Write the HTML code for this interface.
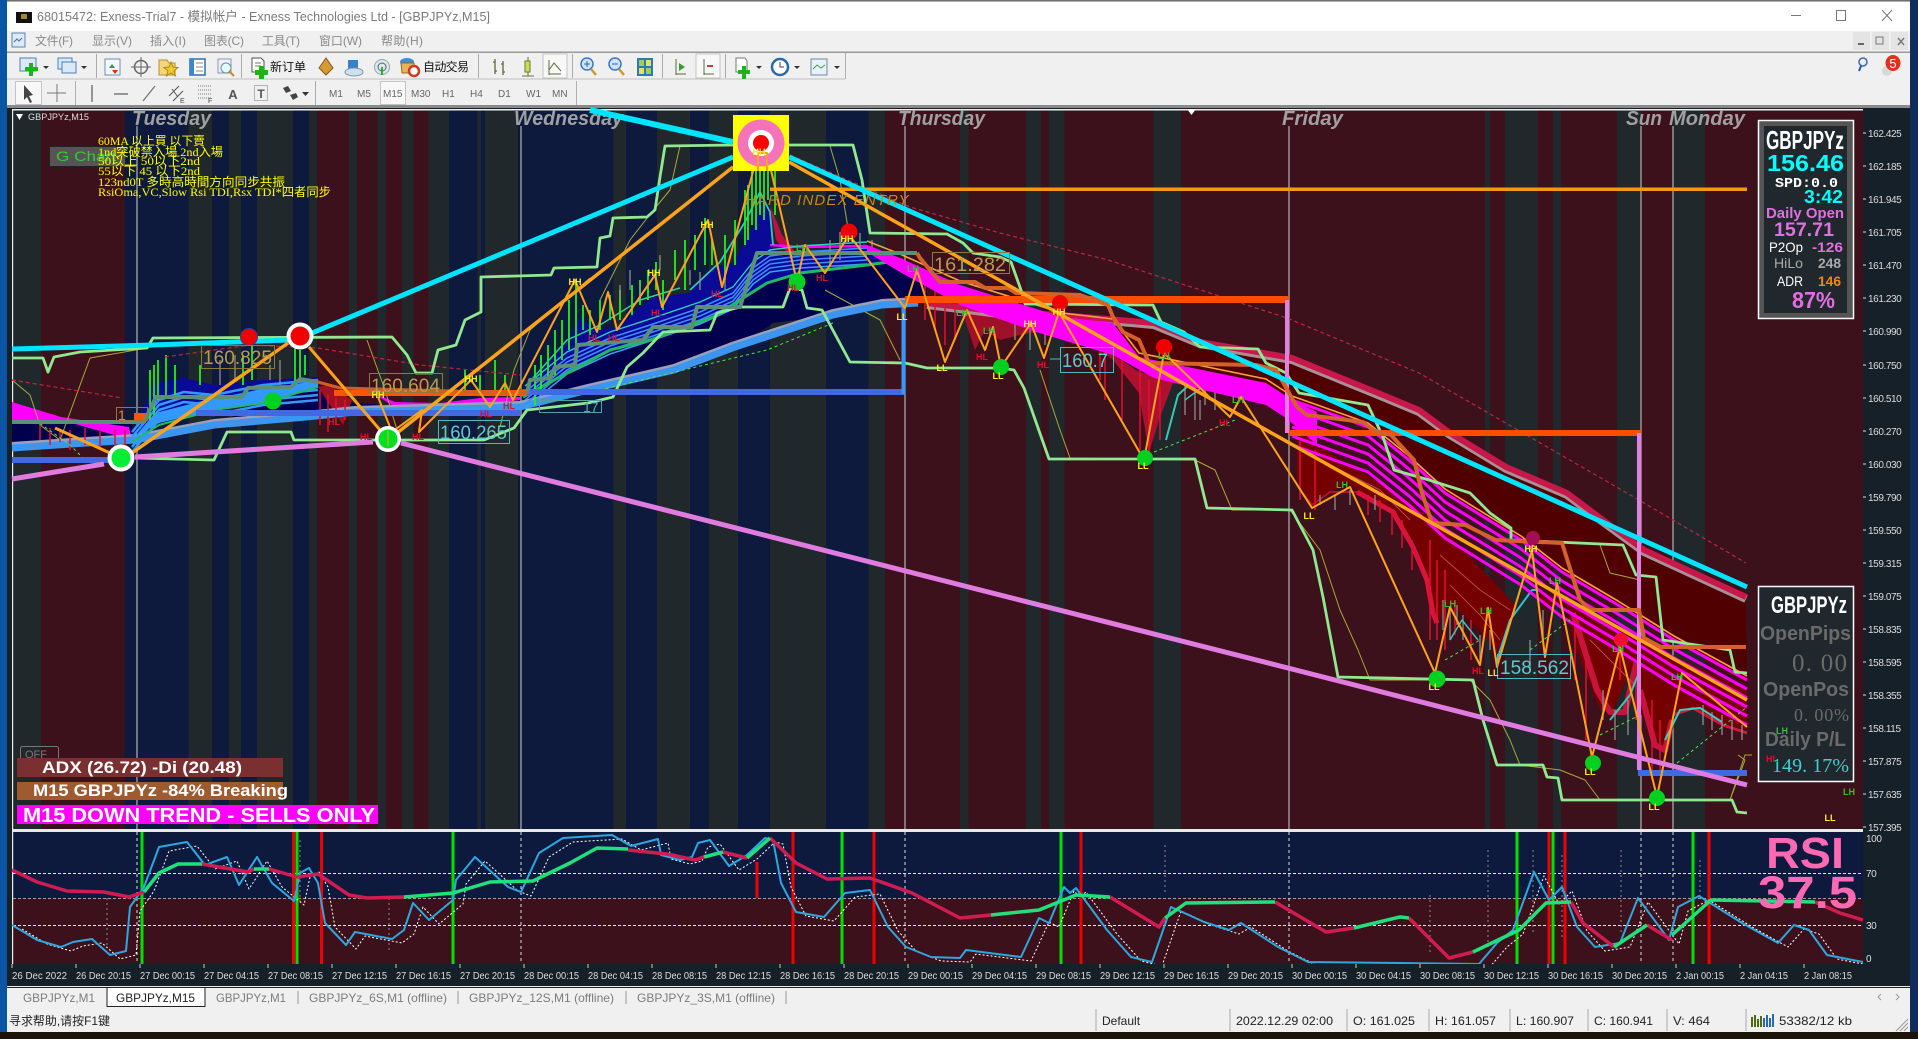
<!DOCTYPE html>
<html><head><meta charset="utf-8"><title>68015472: Exness-Trial7 - GBPJPYz,M15</title>
<style>
html,body{margin:0;padding:0;width:1918px;height:1039px;overflow:hidden;background:#0e2c5c}
svg{display:block;font-family:"Liberation Sans","Noto Sans CJK SC",sans-serif}
.mn{font-size:12px;fill:#8a8a8a}
.tf{font-size:10px;fill:#666}
.ax{font-size:10px;fill:#ddd;letter-spacing:-.4px}
.tm{font-size:10px;fill:#ddd}
.tab{font-size:12px;fill:#7c7c7c}
.st{font-size:12px;fill:#222}
.day{font-size:20px;font-weight:bold;font-style:italic;fill:#a0a0a0}
.y{font-size:12px;fill:#ffff00;font-family:"Liberation Serif","Noto Sans CJK SC",serif}
.b{font-weight:bold}
.HH,.LL{font-size:9px;font-weight:bold;fill:#ffee22;text-anchor:middle}
.HL{font-size:9px;font-weight:bold;fill:#d81030;text-anchor:middle}
.LH{font-size:9px;font-weight:bold;fill:#30c030;text-anchor:middle}
.gold{font-size:19px;fill:#b89a50}
.cy{font-size:19px;fill:#62c8cc}
polyline{fill:none;stroke-linejoin:round}
</style></head><body>
<svg width="1918" height="1039" viewBox="0 0 1918 1039" xmlns="http://www.w3.org/2000/svg">
<!-- desktop -->
<rect width="1918" height="1039" fill="#0e2c5c"/>
<rect x="0" width="8" height="1039" fill="#0b55a5"/>
<rect y="1032" width="1918" height="7" fill="#1c1408"/>
<!-- window chrome -->
<rect x="7" y="0" width="1903" height="1032" fill="#f0f0f0"/>
<rect x="7" y="0" width="1903" height="1.5" fill="#707070"/>
<rect x="7" y="2" width="1903" height="29" fill="#fff"/>
<rect x="16" y="12" width="16" height="11" fill="#11110f"/>
<rect x="21" y="14" width="6" height="5" fill="#a08a30"/>
<text x="37" y="21" font-size="13" fill="#7a7a7a" textLength="453" lengthAdjust="spacingAndGlyphs">68015472: Exness-Trial7 - 模拟帐户 - Exness Technologies Ltd - [GBPJPYz,M15]</text>
<rect x="1791" y="15" width="10" height="1" fill="#777"/>
<rect x="1836.5" y="10.5" width="9" height="10" fill="none" stroke="#777"/>
<path d="M1882 10L1892 21M1892 10L1882 21" stroke="#777"/>
<!-- menu -->
<rect x="12" y="33" width="13" height="14" fill="#dfe8f5" stroke="#5b7fb5"/>
<path d="M14 42l3-3 2 2 3-3" stroke="#3a70b0" fill="none"/>
<text class="mn" x="35" y="45" textLength="38">文件(F)</text>
<text class="mn" x="92" y="45" textLength="40">显示(V)</text>
<text class="mn" x="150" y="45" textLength="36">插入(I)</text>
<text class="mn" x="204" y="45" textLength="40">图表(C)</text>
<text class="mn" x="262" y="45" textLength="38">工具(T)</text>
<text class="mn" x="319" y="45" textLength="43">窗口(W)</text>
<text class="mn" x="381" y="45" textLength="42">帮助(H)</text>
<rect x="1853" y="32" width="17" height="18" fill="#e4e4e4"/><rect x="1872" y="32" width="17" height="18" fill="#e4e4e4"/><rect x="1891" y="32" width="17" height="18" fill="#e4e4e4"/>
<rect x="1858" y="43" width="6" height="2" fill="#666"/>
<rect x="1876" y="37" width="7" height="7" fill="none" stroke="#777"/>
<path d="M1898 38l6 7M1904 38l-6 7" stroke="#777" stroke-width="1.4"/>
<rect x="7" y="51.5" width="1903" height="1.5" fill="#9a9a9a"/>
<!-- toolbar 1 -->
<rect x="845" y="53" width="1" height="26" fill="#b0b0b0"/>
<rect x="7" y="78.5" width="838" height="1" fill="#c0c0c0"/>
<g>
<rect x="20" y="58" width="16" height="13" fill="#dbe8f8" stroke="#4a7fb8"/><rect x="29" y="63" width="4" height="13" fill="#20b020"/><rect x="25" y="67" width="13" height="4" fill="#20b020"/>
<path d="M43 66h6l-3 3z" fill="#333"/>
<rect x="58" y="58" width="14" height="11" fill="#dbe8f8" stroke="#4a7fb8"/><rect x="62" y="62" width="14" height="11" fill="#dbe8f8" stroke="#4a7fb8"/>
<path d="M81 66h6l-3 3z" fill="#333"/>
<rect x="96" y="54" width="1" height="24" fill="#aaa"/>
<rect x="105" y="59" width="15" height="16" fill="#f4f8fc" stroke="#6a90b8"/><path d="M109 68l3-4 3 4z" fill="#20a040"/><path d="M112 70l3 4 3-4z" fill="#d83020"/>
<circle cx="141" cy="67" r="6.5" fill="none" stroke="#666" stroke-width="1.5"/><path d="M141 57v20M131 67h20" stroke="#666"/>
<path d="M159 60h8l2 3h6v12h-16z" fill="#f4d678" stroke="#b49230"/><path d="M171 62l2 5 5 .5-4 3.500 1.500 5-4.500-3-4.500 3 1.500-5-4-3.500 5-.5z" fill="#f2c92e" stroke="#a88818"/>
<rect x="190" y="59" width="15" height="16" fill="#fff" stroke="#2f6fa8" stroke-width="1.500"/><rect x="190" y="59" width="4" height="16" fill="#3a88c8"/><path d="M196 63h7M196 67h7M196 71h7" stroke="#888"/>
<rect x="218" y="59" width="13" height="14" fill="#eef" stroke="#89a"/><circle cx="226" cy="68" r="5" fill="#dff" stroke="#789"/><path d="M229 71l5 5" stroke="#c08a30" stroke-width="2"/>
<rect x="241" y="54" width="1" height="24" fill="#aaa"/>
<path d="M252 58h9l3 3v11h-12z" fill="#fff" stroke="#555"/><path d="M255 63h6M255 66h6" stroke="#777"/><rect x="259" y="66" width="5" height="13" fill="#20b020"/><rect x="255" y="70" width="13" height="5" fill="#20b020"/>
<text x="270" y="71" font-size="12" fill="#111" textLength="36">新订单</text>
<path d="M319 68l7-10 7 10-7 7z" fill="#d89a30" stroke="#85591a"/>
<path d="M348 60h10v10h-10z" fill="#3a80c8"/><ellipse cx="354" cy="72" rx="9" ry="4" fill="#cfe0ee" stroke="#7a94aa"/>
<circle cx="382" cy="67" r="7.500" fill="#dfe9e4" stroke="#8aa"/><circle cx="382" cy="67" r="4" fill="none" stroke="#55a"/><path d="M382 67v8" stroke="#3a3" stroke-width="2"/>
<ellipse cx="407" cy="62" rx="7" ry="4" fill="#3a90d8"/><path d="M401 63h13l1 10h-13z" fill="#e8b25a" stroke="#986820"/><circle cx="414" cy="71" r="5" fill="#fff" stroke="#d03a20" stroke-width="2.500"/>
<text x="423" y="71" font-size="12" fill="#111" textLength="46">自动交易</text>
<rect x="478" y="54" width="1" height="24" fill="#aaa"/>
<path d="M495 59v15M493 62h2M495 71h2M503 61v14M501 64h2M503 72h2" stroke="#5a6a3a" stroke-width="1.300" fill="none"/>
<path d="M528 57v4M528 72v4" stroke="#5a6a3a"/><rect x="525" y="61" width="5" height="11" fill="#c8e050" stroke="#6a7a30"/><path d="M522 76h12" stroke="#6a7a30"/>
<rect x="543" y="54" width="24" height="24" fill="#f8f8f8" stroke="#c4c4c4"/>
<path d="M549 75V60M549 74h12M549 70l5-7 7 8" stroke="#5a6a3a" fill="none"/>
<rect x="572" y="54" width="1" height="24" fill="#aaa"/>
<circle cx="587" cy="64" r="6" fill="#cfe4fa" stroke="#3a78c0" stroke-width="1.500"/><path d="M584 64h6M587 61v6" stroke="#2a68b0"/><path d="M591 69l5 6" stroke="#c89a30" stroke-width="2.500"/>
<circle cx="615" cy="64" r="6" fill="#cfe4fa" stroke="#3a78c0" stroke-width="1.500"/><path d="M612 64h6" stroke="#2a68b0"/><path d="M619 69l5 6" stroke="#c89a30" stroke-width="2.500"/>
<rect x="637" y="58" width="16" height="18" fill="#2f78b8"/><rect x="639" y="60" width="5" height="6" fill="#9bd060"/><rect x="646" y="60" width="5" height="6" fill="#e8e060"/><rect x="639" y="68" width="5" height="6" fill="#e8e060"/><rect x="646" y="68" width="5" height="6" fill="#9bd060"/>
<rect x="662" y="54" width="1" height="24" fill="#aaa"/>
<path d="M676 59v16M676 74h10" stroke="#5a6a3a"/><path d="M679 63l6 4-6 4z" fill="#30a030"/>
<rect x="696" y="54" width="24" height="24" fill="#f8f8f8" stroke="#c4c4c4"/>
<path d="M704 59v16M704 74h10" stroke="#5a6a3a"/><path d="M707 66h6" stroke="#c04030" stroke-width="2"/>
<rect x="725" y="54" width="1" height="24" fill="#aaa"/>
<path d="M736 58h9l2 3v11h-11z" fill="#fff" stroke="#777"/><rect x="742" y="66" width="4" height="13" fill="#20b020"/><rect x="738" y="70" width="12" height="4" fill="#20b020"/>
<path d="M756 66h6l-3 3z" fill="#333"/>
<circle cx="780" cy="67" r="8" fill="#fff" stroke="#2a68a8" stroke-width="2.500"/><path d="M780 62v5h4" stroke="#444" fill="none"/>
<path d="M794 66h6l-3 3z" fill="#333"/>
<rect x="811" y="59" width="16" height="16" fill="#e8f0f8" stroke="#6c8aa8"/><path d="M813 69l4-4 4 3 4-3" stroke="#40a040" fill="none"/>
<path d="M834 66h6l-3 3z" fill="#333"/>
</g>
<!-- right of toolbar -->
<circle cx="1863" cy="62" r="4" fill="none" stroke="#3a68b0" stroke-width="1.500"/><path d="M1861 66l-2 5" stroke="#2a58a8" stroke-width="2"/>
<ellipse cx="1887" cy="71" rx="5" ry="5" fill="#d8d8d8"/>
<ellipse cx="1893" cy="63" rx="7.500" ry="8" fill="#e03020"/><text x="1893" y="68" font-size="13" fill="#fff" text-anchor="middle">5</text>
<!-- toolbar 2 -->
<rect x="15.500" y="81.500" width="26" height="23" fill="#f8f8f8" stroke="#c4c4c4"/>
<path d="M24 85l0 15 3-3 3 6 2-1-3-6 4-1z" fill="#444"/>
<path d="M57 84v18M47 93h19" stroke="#777"/><rect x="75" y="81" width="1" height="24" fill="#b0b0b0"/>
<path d="M92 85v17" stroke="#666" stroke-width="1.300"/><path d="M114 94h14" stroke="#666" stroke-width="1.300"/><path d="M143 101l12-15" stroke="#777" stroke-width="1.300"/>
<path d="M169 96l10-10M173 101l10-10M172 89l6 8" stroke="#555" fill="none"/><text x="180" y="103" font-size="7" fill="#444">E</text>
<path d="M198 86h13M198 90h13M198 94h13M198 98h13" stroke="#777" stroke-dasharray="1 1"/><text x="208" y="103" font-size="7" fill="#444">F</text>
<text x="233" y="99" font-size="13" fill="#555" text-anchor="middle" class="b">A</text>
<rect x="254.500" y="85.500" width="13" height="15" fill="none" stroke="#777" stroke-dasharray="1 1"/><text x="261" y="98" font-size="12" class="b" fill="#555" text-anchor="middle">T</text>
<path d="M283 88l5-2 3 5-5 2zM290 95l6-2 2 4-5 3z" fill="#444"/><path d="M302 92h7l-3.500 4z" fill="#333"/>
<rect x="315" y="81" width="1" height="24" fill="#aaa"/>
<rect x="380.500" y="81.500" width="25" height="23" fill="#f8f8f8" stroke="#c4c4c4"/>
<text class="tf" x="329" y="97">M1</text><text class="tf" x="357" y="97">M5</text><text class="tf" x="383" y="97">M15</text><text class="tf" x="411" y="97">M30</text><text class="tf" x="442" y="97">H1</text><text class="tf" x="470" y="97">H4</text><text class="tf" x="498" y="97">D1</text><text class="tf" x="526" y="97">W1</text><text class="tf" x="552" y="97">MN</text>
<rect x="576" y="81" width="1" height="24" fill="#b0b0b0"/>
<rect x="7" y="105" width="1903" height="3" fill="#8a8a8a"/>

<!-- chart frame bg -->
<rect x="7" y="108" width="1903" height="880" fill="#152029"/>
<rect x="12" y="109" width="1851" height="722" fill="#3d111b"/>
<!-- vertical bands -->
<g fill="#21282c">
<rect x="13" y="110" width="28" height="719"/><rect x="188.500" y="110" width="23.500" height="719"/><rect x="229" y="110" width="12" height="719"/><rect x="257" y="110" width="36" height="719"/><rect x="309" y="110" width="8" height="719"/><rect x="349" y="110" width="8" height="719"/><rect x="377.500" y="110" width="8.500" height="719"/><rect x="402" y="110" width="11.500" height="719"/><rect x="428.500" y="110" width="20.500" height="719"/><rect x="477.500" y="110" width="3.500" height="719"/><rect x="485" y="110" width="33" height="719"/><rect x="613.500" y="110" width="12.500" height="719"/><rect x="657" y="110" width="33" height="719"/><rect x="709" y="110" width="29" height="719"/><rect x="770" y="110" width="56" height="719"/><rect x="868.500" y="110" width="16.500" height="719"/><rect x="960" y="110" width="8.500" height="719"/><rect x="1026" y="110" width="15" height="719"/><rect x="1049" y="110" width="15.500" height="719"/><rect x="1153.500" y="110" width="27.500" height="719"/><rect x="1485" y="110" width="5" height="719"/><rect x="1505" y="110" width="32.500" height="719"/><rect x="1553" y="110" width="8" height="719"/><rect x="1617" y="110" width="24" height="719"/><rect x="1673" y="110" width="32" height="719"/>
</g>
<g fill="#0d1a3e">
<rect x="124.500" y="110" width="64" height="719"/><rect x="212" y="110" width="17" height="719"/><rect x="241" y="110" width="16" height="719"/><rect x="293" y="110" width="16" height="719"/><rect x="449" y="110" width="28.500" height="719"/><rect x="481" y="110" width="4" height="719"/><rect x="518" y="110" width="95.500" height="719"/><rect x="626" y="110" width="31" height="719"/><rect x="690" y="110" width="19" height="719"/><rect x="738" y="110" width="32" height="719"/><rect x="826" y="110" width="42.500" height="719"/>
</g>
<!-- separators/white border -->
<rect x="12" y="109" width="1851" height="1.500" fill="#eee"/><rect x="12" y="109" width="1.200" height="722" fill="#eee"/>
<!-- vertical grid -->
<g stroke="#a8a8a8" stroke-width="1.300"><path d="M137 126V829M521 126V829M905 126V829M1289 126V829M1641 126V829M1673 126V829"/></g>
<!-- day labels -->
<text class="day" x="132" y="125" textLength="79" lengthAdjust="spacingAndGlyphs">Tuesday</text>
<text class="day" x="514" y="125" textLength="109" lengthAdjust="spacingAndGlyphs">Wednesday</text>
<text class="day" x="898" y="125" textLength="87" lengthAdjust="spacingAndGlyphs">Thursday</text>
<text class="day" x="1282" y="125" textLength="61" lengthAdjust="spacingAndGlyphs">Friday</text>
<text class="day" x="1626" y="125" textLength="36" lengthAdjust="spacingAndGlyphs">Sun</text>
<text class="day" x="1669" y="125" textLength="76" lengthAdjust="spacingAndGlyphs">Monday</text>
<path d="M1187 109h9l-4.500 6z" fill="#fff"/>
<path d="M16 114h7l-3.500 6z" fill="#fff"/>
<text x="28" y="120" font-size="9.500" fill="#ddd" textLength="61" lengthAdjust="spacingAndGlyphs">GBPJPYz,M15</text>

<!-- clouds -->
<polygon points="523,397 567,373 610,350 650,340 713,317 767,283 800,273 867,265 903,260 927,275 927,300 903,300 867,303 833,315 773,323 747,340 667,370 600,387 523,405" fill="#00004c"/>
<polygon points="533,380 567,343 580,317 597,330 617,327 653,297 690,293 713,267 733,263 753,227 763,195 772,227 773,250 800,253 867,247 903,260 867,265 800,273 767,283 713,317 650,340 610,350 567,373 523,397" fill="#0a0a96"/>
<polygon points="12,423 132,423 132,437 12,443" fill="#00004c"/>
<polygon points="132,437 153,383 184,378 214,385 263,380 318,377 318,387 263,403 214,410 159,423" fill="#0a0a96"/>
<polygon points="135,437 159,412 214,398 263,390 318,380 318,387 263,403 214,410 159,423" fill="#3399ff"/>
<polygon points="263,403 318,387 345,402 420,408 520,403 520,407 355,412 306,417 214,425" fill="#00004c"/>
<polygon points="1060,317 1113,323 1154,323 1200,342 1292,358 1378,393 1419,410 1450,433 1506,467 1567,493 1603,520 1644,550 1746,597 1747,685 1674,640 1618,605 1562,572 1521,540 1445,493 1409,460 1368,427 1292,400 1266,383 1139,357 1113,323" fill="#500000"/>
<polygon points="1297,420 1317,445 1399,495 1440,525 1515,605 1510,627 1497,653 1480,630 1450,603 1437,623 1430,610 1417,547 1393,510 1357,490 1345,482 1312,507 1297,480" fill="#750000"/>
<polygon points="1540,590 1640,640 1747,690 1747,730 1723,723 1693,707 1673,713 1663,747 1640,713 1637,657 1613,710 1600,710 1573,640 1567,607 1560,603 1543,607" fill="#750000"/>
<polygon points="1077,333 1113,355 1139,372 1174,380 1159,420 1149,453 1139,393 1113,360" fill="#b01030"/>
<polygon points="925,272 960,305 975,350 985,330 1000,340 1020,335 1036,332 960,300" fill="#a01028"/>
<polyline points="1357,492 1393,512 1413,547 1427,580 1433,613 1437,623" stroke="#d8143c" stroke-width="5"/>
<polyline points="1573,613 1597,690 1610,712 1625,712 1637,660" stroke="#c8143c" stroke-width="6"/>
<polyline points="1640,690 1655,745 1665,750 1672,720" stroke="#c8143c" stroke-width="6"/>
<polyline points="1673,715 1693,708 1723,725 1747,733" stroke="#d8143c" stroke-width="3"/>
<polyline points="1300,490 1312,505 1330,492 1357,492" stroke="#b01030" stroke-width="2"/>
<g stroke="#b84a50" stroke-width="1" fill="none">
<polyline points="1440,555 1480,590 1510,610"/><polyline points="1450,585 1480,615 1500,640"/><polyline points="1590,640 1620,670 1640,690"/><polyline points="1330,465 1380,490 1410,520"/>
</g>
<polygon points="318,387 343,425 352,400 330,385" fill="#a01020"/>
<polygon points="770,205 782,235 800,258 792,258 776,240" fill="#c01040"/>
<polygon points="12,402 61,417 129,427 132,440 61,420 12,420" fill="#ff00ff"/>
<polygon points="373,393 395,402 440,403 480,398 520,397 520,400 440,408 395,407" fill="#ff00ff"/>
<polyline points="770,245 800,247 867,246" stroke="#ff00ff" stroke-width="2.500"/>

<!-- thin olive lines -->
<g stroke="#a8a83a" stroke-width="1" fill="none">
<polyline points="12,380 30,395 40,425 60,440 90,358 147,348"/>
<polyline points="367,340 385,390 400,440"/>
<polyline points="500,427 514,370 530,330 590,278"/>
<polyline points="600,300 630,240 655,208 670,190 680,146"/>
<polyline points="830,146 840,180 850,240"/>
<polyline points="825,290 880,320 900,360"/>
<polyline points="1040,370 1060,430 1070,458 1195,460 1215,470 1232,510 1290,510 1320,550 1340,610 1358,650 1370,680 1470,680 1490,700 1510,740 1520,765 1560,770 1585,780 1600,800 1680,800"/>
<polyline points="1600,545 1610,573 1640,580"/>
<polyline points="1730,800 1745,755 1752,755"/>
</g>
<polyline points="1730,800 1745,760 1738,755" stroke="#a8a83a" fill="none"/>

<!-- slow MA band -->
<polyline points="12,448 86,443 135,440 214,425 306,417 355,412 520,407 588,390 674,370 735,347 833,315 882,305 918,303" stroke="#9aa0bc" stroke-width="8" transform="translate(0,-2)"/>
<polyline points="12,448 86,443 135,440 214,425 306,417 355,412 520,407 588,390 674,370 735,347 833,315 882,305 918,303" stroke="#3c96f0" stroke-width="7"/>
<polyline points="927,303 1000,312 1060,315 1154,323 1200,342 1292,358 1378,393 1419,410 1450,433 1506,467 1567,493 1603,520 1644,550 1746,597" stroke="#a89098" stroke-width="8" transform="translate(0,2)"/>
<polyline points="927,303 1000,312 1060,315 1154,323 1200,342 1292,358 1378,393 1419,410 1450,433 1506,467 1567,493 1603,520 1644,550 1746,597" stroke="#c8184a" stroke-width="6"/>

<!-- blue ribbons -->
<defs>
<polyline id="r1" points="525,392 567,358 610,338 650,325 700,308 733,293 753,268 770,256 800,252 867,248"/>
<polyline id="r2" points="132,432 159,400 184,392 214,395 263,385 318,380"/>
<polyline id="mg" points="1292,400 1368,427 1409,460 1445,493 1521,540 1562,572 1618,605 1674,640 1747,680"/>
<polyline id="rsi" points="12,925 37,940 61,947 73,942 92,939 110,955 126,951 130,907 144,887 159,847 187,842 205,865 227,857 239,885 257,857 272,883 294,901 300,873 309,868 318,883 325,923 346,945 355,932 392,939 404,930 413,903 429,920 453,900 456,880 475,857 508,887 521,892 539,853 563,838 612,835 631,846 658,839 661,855 680,860 692,857 698,843 710,840 729,866 747,855 765,838 773,840 781,883 796,912 824,917 845,893 870,890 888,927 906,947 931,957 960,958 966,950 1021,957 1039,918 1049,923 1064,887 1070,893 1076,888 1107,930 1131,957 1152,962 1171,907 1204,922 1229,930 1241,923 1278,947 1308,962 1479,964 1497,943 1513,930 1534,872 1549,900 1562,887 1577,927 1595,947 1620,943 1638,898 1669,940 1678,907 1699,896 1742,923 1778,943 1794,925 1809,930 1827,955 1863,962"/>
</defs>
<g stroke="#3f8cff" stroke-width="1.600" fill="none">
<use href="#r1"/><use href="#r1" transform="translate(0,4)"/><use href="#r1" transform="translate(0,8)"/><use href="#r1" transform="translate(0,12)"/><use href="#r1" transform="translate(0,16)" stroke="#3aa0f0"/>
</g>
<use href="#r1" transform="translate(0,-6)" stroke="#30d0c0" stroke-width="1.400" fill="none"/>
<polyline points="690,290 720,262 745,222 760,192 770,212 773,245" stroke="#30c8c0" stroke-width="1.800"/>
<polyline points="533,378 567,340 600,325 640,300 680,288" stroke="#30d0a0" stroke-width="1.500"/>
<polyline points="523,397 567,373 610,350 650,340 713,317 767,283 800,273 867,265 903,260" stroke="#22b868" stroke-width="3"/>
<g stroke="#3399ff" stroke-width="2.500" fill="none">
<use href="#r2"/><use href="#r2" transform="translate(0,5)"/><use href="#r2" transform="translate(0,10)"/><use href="#r2" transform="translate(0,15)"/><use href="#r2" transform="translate(0,20)"/>
</g>
<polyline points="132,442 159,425 214,410 263,403 318,387" stroke="#22b868" stroke-width="2"/>

<!-- candles -->
<path d="M535 405V365M541 390V355M548 380V345M555 375V330M562 360V320M569 350V300M576 345V280M583 330V305M590 335V310M600 330V300M610 320V295M620 320V290M632 315V285M640 305V280M648 300V270M656 290V262M663 310V280M675 280V250M685 290V240M695 270V235M705 265V218M712 265V240M725 280V235M735 265V220M745 245V190M748 240V185M752 225V170M756 230V160M760 215V150M764 220V155M768 200V155M775 215V165M150 420V370M154 415V365M158 400V360M166 395V355M175 395V365M200 385V365M243 385V355M252 380V345M295 385V345M300 380V350M305 375V355M465 395V370M480 390V375M495 395V360M505 390V375" stroke="#22ee22" stroke-width="1.800" fill="none"/>
<path d="M620 300V285M630 290V270M640 300V285M660 270V255M690 285V270M700 290V272M725 290V270M830 265V240M840 260V232M860 250V233M872 255V240M220 385V360M235 380V355M270 380V365M280 385V360M1185 415V385M1195 420V390M1205 405V385M1215 410V392M1443 630V600M1450 640V610M1457 625V605M1463 640V615M1480 660V635M1490 650V630M1530 670V640M1543 640V610M1603 720V690M1615 740V710M1628 735V700M1703 725V705M1712 730V712M1722 735V715M1732 740V720M1742 740V725M1015 340V320M1030 350V330M1045 345V325M1200 420V400M1320 505V495M1335 510V495M1350 505V490M1375 510V495" stroke="#8f8f8f" stroke-width="1.300" fill="none"/>
<path d="M40 425V440M50 428V445M60 430V442M70 430V450M85 428V445M100 430V450M115 430V450M125 430V445M320 390V425M328 395V432M336 398V425M345 400V420M1100 340V380M1105 345V400M1122 350V420M1140 370V450M1149 380V460M1160 385V440M925 275V320M935 285V330M945 290V345M955 300V340M1300 440V500M1315 450V510M1368 495V515M1380 500V522M1392 510V535M1402 520V548M1412 540V570M1430 540V640M1437 560V640M1445 570V650M1455 600V635M1471 620V660M1575 620V680M1586 660V740M1620 640V680M1636 680V720M1652 700V780M1660 720V770" stroke="#e01030" stroke-width="1.500" fill="none"/>
<polyline points="1497,660 1510,620 1532,590 1540,590" stroke="#30c0d0" stroke-width="2"/>
<polyline points="1450,640 1462,620 1478,640" stroke="#38c8b0" stroke-width="1.500"/>
<polyline points="1610,720 1630,695 1640,670" stroke="#38c8b0" stroke-width="2"/>
<polyline points="1665,740 1680,710 1700,708 1722,722" stroke="#38d0c0" stroke-width="2"/>
<polyline points="1185,400 1205,385 1222,390" stroke="#38c8b0" stroke-width="1.500"/>
<polyline points="1166,440 1178,395 1200,375" stroke="#38c8b0" stroke-width="2"/>

<!-- magenta ribbons -->
<polygon points="867,245 900,258 960,285 1062,317 1113,323 1139,357 1266,383 1292,400 1317,412 1317,445 1286,418 1266,405 1154,378 1113,355 1036,332 960,305 900,272 867,252" fill="#ff00ff"/>
<polyline points="867,241 900,254 960,281 1062,313 1113,319 1139,353 1266,379 1292,396 1368,423 1409,456 1445,489 1521,536 1562,568 1618,601 1674,636 1747,676" stroke="#ffa040" stroke-width="1.600"/>
<g stroke="#ff00ff" stroke-width="3" fill="none">
<use href="#mg"/><use href="#mg" transform="translate(0,9)"/><use href="#mg" transform="translate(0,18)"/><use href="#mg" transform="translate(0,27)"/><use href="#mg" transform="translate(0,36)"/><use href="#mg" transform="translate(0,45)"/>
</g>

<!-- red dashed, green dashed -->
<g fill="none" stroke="#b82840" stroke-width="1.200" stroke-dasharray="4 3">
<polyline points="12,380 122,398"/><polyline points="165,357 250,345 318,348 420,365 520,375"/><polyline points="790,155 910,207 1000,233 1108,260 1287,318 1419,373 1639,500 1746,563"/>
</g>
<g fill="none" stroke="#50e050" stroke-width="1" stroke-dasharray="3 3">
<polyline points="35,420 70,445 85,460"/><polyline points="600,390 767,350 833,323"/><polyline points="1154,452 1235,420"/><polyline points="1445,660 1480,640"/><polyline points="1600,735 1640,715"/><polyline points="1677,763 1747,707"/><polyline points="1530,650 1570,620"/>
</g>

<!-- ladder lines -->
<polyline points="12,358 43,358 48,372 54,357 80,352 147,348 153,338 392,337 407,355 416,373 432,373 438,350 456,345 465,320 481,312 481,277 551,275 554,268 597,267 600,238 610,236 613,218 647,217 655,210 660,177 665,146 733,145 789,145 853,145 862,180 870,233 947,234 963,243 973,253 1000,257 1011,262 1021,290 1025,304 1153,305 1161,322 1184,332 1200,347 1258,349 1266,363 1286,373 1299,393 1368,405 1383,437 1394,470 1429,480 1470,493 1490,513 1511,528 1511,540 1623,545 1636,575 1656,577 1660,613 1663,640 1730,650 1735,672 1747,673" stroke="#90e890" stroke-width="2.800"/>
<polyline points="135,458 214,460 227,432 291,432 294,440 484,440 514,428 527,410 588,403 613,397 627,367 643,353 663,332 710,330 717,313 740,307 783,307 790,288 802,290 807,308 822,310 850,362 905,363 927,368 1000,368 1014,370 1024,388 1037,425 1049,459 1195,459 1207,508 1292,510 1313,550 1323,597 1338,677 1473,680 1483,720 1497,765 1543,765 1547,777 1558,778 1562,800 1732,800 1737,812 1747,813" stroke="#90e890" stroke-width="2.800"/>

<!-- blue horizontals -->
<rect x="12" y="457" width="98" height="6" fill="#4169e1"/>
<rect x="196" y="410" width="324" height="6" fill="#4169e1"/>
<rect x="520" y="389" width="384" height="6" fill="#4169e1"/>
<rect x="901.500" y="300" width="4" height="94" fill="#3399ff"/>
<rect x="1638" y="770" width="109" height="6" fill="#4169e1"/>
<!-- orange horizontals -->
<rect x="770" y="187.500" width="977" height="3.500" fill="#f59a10"/>
<rect x="905" y="296" width="384" height="7" fill="#ff4d00"/>
<rect x="1289" y="430" width="352" height="6" fill="#ff4d00"/>
<rect x="334" y="390" width="193" height="6" fill="#ff5500"/>
<rect x="134" y="413" width="12" height="7" fill="#ff5500"/>
<rect x="1285" y="300" width="4" height="133" fill="#e080e0"/>
<rect x="1637" y="433" width="4" height="337" fill="#e080e0"/>

<!-- stepped gray-green & brown -->
<polyline points="12,422 144,422 156,397 242,397 248,388 291,387 300,379 318,382" stroke="#5b8f78" stroke-width="4"/>
<polyline points="527,393 530,380 550,378 555,367 575,365 577,345 643,340 653,327 692,327 697,307 740,307 757,253 917,253" stroke="#5b8f78" stroke-width="4"/>
<polyline points="318,382 340,388 527,393" stroke="#c8622a" stroke-width="3"/>
<polyline points="917,253 920,258 940,282 975,282 985,288 1008,288 1016,293 1080,295 1108,305 1113,317 1123,332 1139,340 1149,363 1256,365 1276,370 1297,407 1307,415 1363,422 1373,430 1391,435 1414,460 1422,493 1432,523 1465,525 1496,540 1562,543 1580,600 1590,610 1639,610 1644,638 1661,647 1746,647" stroke="#d2622a" stroke-width="4"/>

<!-- zigzag thin -->
<polyline points="378,397 392,432 422,410 419,432 471,380 490,407 505,383 513,400 575,280 597,332 608,292 617,330 655,275 662,307 708,220 722,287 758,153 767,153 797,282 805,245 825,273 847,238 853,240 905,308 917,270 945,362 967,310 985,350 993,327 1001,367 1031,323 1044,358 1059,312 1144,460 1164,353 1230,417 1241,397 1312,508 1350,487 1435,673 1450,607 1480,665 1488,608 1497,667 1532,550 1545,657 1557,583 1592,757 1620,647 1657,797 1682,673 1747,727" stroke="#ffa31a" stroke-width="2"/>

<!-- pink trend -->
<polyline points="12,479 104,464" stroke="#e07be0" stroke-width="5"/>
<polyline points="135,457 373,442" stroke="#e07be0" stroke-width="5"/>
<polyline points="401,443 1280,666 1747,785" stroke="#e07be0" stroke-width="5"/>
<!-- cyan trend -->
<polyline points="12,349 153,345 288,340" stroke="#00e5ff" stroke-width="5"/>
<polyline points="312,333 733,157" stroke="#00e5ff" stroke-width="5"/>
<polyline points="590,110 733,142" stroke="#00e5ff" stroke-width="6"/>
<polyline points="789,157 1747,587" stroke="#00e5ff" stroke-width="5"/>
<!-- orange trend -->
<polyline points="55,428 110,453" stroke="#ffa31a" stroke-width="3"/>
<polyline points="132,453 288,343" stroke="#ffa31a" stroke-width="3.500"/>
<polyline points="309,347 386,437" stroke="#ffa31a" stroke-width="3"/>
<polyline points="392,437 733,167" stroke="#ffa31a" stroke-width="3.500"/>
<polyline points="789,162 1747,700" stroke="#ffa31a" stroke-width="3.500"/>

<!-- target -->
<rect x="733" y="115" width="56" height="56" fill="#ffff00"/>
<circle cx="761" cy="143" r="23.500" fill="#f573b8"/><circle cx="761" cy="143" r="13" fill="#fff"/><circle cx="761" cy="143" r="8" fill="#ff0000"/>
<polyline points="758,171 758,153 767,153 767,171" stroke="#ffa31a" stroke-width="2"/>
<!-- circles -->
<circle cx="121" cy="458" r="13.500" fill="#fff"/><circle cx="121" cy="458" r="9.500" fill="#00ee33"/>
<circle cx="388" cy="439" r="13" fill="#fff"/><circle cx="388" cy="439" r="9.500" fill="#00e020"/><path d="M388 446v-15" stroke="#ffa31a"/>
<circle cx="300" cy="336" r="13.500" fill="#fff"/><circle cx="300" cy="336" r="9.500" fill="#f00000"/>
<circle cx="249" cy="337" r="9" fill="#304090"/><circle cx="249" cy="337" r="8" fill="#f00000"/>
<circle cx="273" cy="401" r="8.500" fill="#00d020"/>
<circle cx="797" cy="282" r="8.500" fill="#00d020"/>
<circle cx="849" cy="232" r="8.500" fill="#f00000"/>
<circle cx="1060" cy="303" r="8" fill="#f00000"/><circle cx="1164" cy="347" r="8" fill="#f00000"/>
<circle cx="1001" cy="367" r="8" fill="#00d020"/><circle cx="1145" cy="458" r="8" fill="#00d020"/>
<circle cx="1437" cy="679" r="8.500" fill="#00d020"/><circle cx="1593" cy="763" r="8" fill="#00d020"/><circle cx="1657" cy="798" r="8" fill="#00d020"/>
<circle cx="1533" cy="538" r="7" fill="#a01050"/><circle cx="1621" cy="640" r="7" fill="#f01030"/>

<!-- price boxes -->
<rect x="201.500" y="345.500" width="73" height="23" fill="none" stroke="#8f7a3e"/><text class="gold" x="203" y="364" textLength="69" lengthAdjust="spacingAndGlyphs">160.825</text>
<rect x="369.500" y="373.500" width="73" height="19" fill="none" stroke="#8f7a3e"/><text class="gold" x="371" y="392" textLength="69" lengthAdjust="spacingAndGlyphs">160.604</text>
<rect x="438.500" y="420.500" width="71" height="23" fill="none" stroke="#50b8c0"/><text class="cy" x="440" y="439" textLength="67" lengthAdjust="spacingAndGlyphs">160.265</text>
<rect x="116.500" y="407.500" width="31" height="13" fill="none" stroke="#8f7a3e"/><text x="118" y="420" font-size="14" fill="#b89a50">1</text>
<rect x="539.500" y="400.500" width="62" height="12" fill="none" stroke="#50a0a0"/><text x="583" y="412" font-size="14" fill="#50b0b0">17</text>
<rect x="932.500" y="252.500" width="77" height="21" fill="none" stroke="#8f7a3e"/><text class="gold" x="934" y="271" textLength="72" lengthAdjust="spacingAndGlyphs">161.282</text>
<rect x="1060.500" y="347.500" width="53" height="25" fill="none" stroke="#50b8c0"/><text class="cy" x="1062" y="367" textLength="46" lengthAdjust="spacingAndGlyphs">160.7</text>
<path d="M1050 359h10" stroke="#50b8c0"/>
<rect x="1497.500" y="654.500" width="73" height="24" fill="none" stroke="#50b8c0"/><text class="cy" x="1500" y="674" textLength="69" lengthAdjust="spacingAndGlyphs">158.562</text>
<text x="745" y="205" font-size="15" font-style="italic" fill="#c8861a" letter-spacing="1.500" textLength="165" lengthAdjust="spacing">HARD INDEX ENTRY</text>

<!-- zig labels -->
<g>
<text class="HH" x="575" y="285">HH</text><text class="HH" x="654" y="276">HH</text><text class="HH" x="707" y="228">HH</text><text class="HH" x="759" y="155">HH</text><text class="HH" x="847" y="242">HH</text><text class="HH" x="471" y="382">HH</text><text class="HH" x="378" y="398">HH</text><text class="HH" x="1059" y="315">HH</text><text class="HH" x="1030" y="327">HH</text><text class="HH" x="1531" y="552">HH</text>
<text class="HL" x="594" y="341">HL</text><text class="HL" x="614" y="341">HL</text><text class="HL" x="657" y="316">HL</text><text class="HL" x="717" y="297">HL</text><text class="HL" x="793" y="291">HL</text><text class="HL" x="822" y="281">HL</text><text class="HL" x="509" y="409">HL</text><text class="HL" x="982" y="360">HL</text><text class="HL" x="486" y="417">HL</text><text class="HL" x="418" y="440">HL</text><text class="HL" x="366" y="440">HL</text><text class="HL" x="334" y="425">HL</text><text class="HL" x="1043" y="368">HL</text><text class="HL" x="1225" y="426">HL</text><text class="HL" x="1478" y="674">HL</text>
<text class="LL" x="902" y="320">LL</text><text class="LL" x="942" y="371">LL</text><text class="LL" x="998" y="379">LL</text><text class="LL" x="1143" y="469">LL</text><text class="LL" x="1309" y="519">LL</text><text class="LL" x="1434" y="690">LL</text><text class="LL" x="1493" y="676">LL</text><text class="LL" x="1590" y="775">LL</text><text class="LL" x="1654" y="810">LL</text>
<text class="LH" x="802" y="251">LH</text><text class="LH" x="913" y="272">LH</text><text class="LH" x="962" y="316">LH</text><text class="LH" x="989" y="334">LH</text><text class="LH" x="1164" y="359">LH</text><text class="LH" x="1238" y="403">LH</text><text class="LH" x="1342" y="488">LH</text><text class="LH" x="1450" y="607">LH</text><text class="LH" x="1486" y="614">LH</text><text class="LH" x="1555" y="584">LH</text><text class="LH" x="1618" y="652">LH</text><text class="LH" x="1677" y="680">LH</text>
<text class="LH" x="1849" y="795">LH</text><text class="LL" x="1830" y="821">LL</text>
</g>

<!-- yellow note -->
<rect x="49.500" y="146.500" width="76" height="20" fill="#555" stroke="#222"/>
<text x="56" y="161" font-size="14" fill="#33cc33" textLength="60" lengthAdjust="spacingAndGlyphs">G Chart</text>
<text class="y" x="98" y="145" textLength="107" lengthAdjust="spacingAndGlyphs">60MA 以上買 以下賣</text>
<text class="y" x="98" y="156" textLength="125" lengthAdjust="spacingAndGlyphs">1nd突破禁入場 2nd入場</text>
<text class="y" x="98" y="165" textLength="102" lengthAdjust="spacingAndGlyphs">50以上  50以下2nd</text>
<text class="y" x="98" y="175" textLength="102" lengthAdjust="spacingAndGlyphs">55以下 45 以下2nd</text>
<text class="y" x="98" y="186" textLength="187" lengthAdjust="spacingAndGlyphs">123nd0T 多時高時間方向同步共振</text>
<text class="y" x="98" y="196" textLength="233" lengthAdjust="spacingAndGlyphs">RsiOma,VC,Slow Rsi TDI,Rsx TDI*四者同步</text>

<!-- bottom-left bars -->
<rect x="20.500" y="746.500" width="38" height="14" fill="none" stroke="#777" rx="2"/><text x="25" y="758" font-size="11" fill="#777">OFF</text>
<rect x="17" y="758" width="266" height="19" fill="#7a3030"/>
<text x="42" y="773" font-size="17" font-weight="bold" fill="#fff" textLength="200" lengthAdjust="spacingAndGlyphs">ADX (26.72)  -Di (20.48)</text>
<rect x="17" y="782" width="266" height="18" fill="#a05a30"/>
<text x="33" y="796" font-size="16.500" font-weight="bold" fill="#fff" textLength="255" lengthAdjust="spacingAndGlyphs">M15 GBPJPYz -84% Breaking</text>
<rect x="17" y="805" width="361" height="19" fill="#ff00ff"/>
<text x="23" y="822" font-size="20" font-weight="bold" fill="#fff" textLength="352" lengthAdjust="spacingAndGlyphs">M15  DOWN TREND - SELLS ONLY</text>

<!-- panel 1 -->
<rect x="1758.500" y="120.500" width="95" height="198" fill="#555" stroke="#fff" stroke-width="1.500"/>
<rect x="1764" y="126" width="83" height="187" fill="#20282d"/>
<g font-weight="bold">
<text x="1766" y="149" font-size="26" fill="#fff" textLength="78" lengthAdjust="spacingAndGlyphs">GBPJPYz</text>
<text x="1767" y="171" font-size="23" fill="#00ffff" textLength="77" lengthAdjust="spacingAndGlyphs">156.46</text>
<text x="1775" y="187" font-size="14" fill="#fff" font-family="Liberation Mono,monospace" textLength="63" lengthAdjust="spacingAndGlyphs">SPD:0.0</text>
<text x="1804" y="203" font-size="18" fill="#00ffff" textLength="39" lengthAdjust="spacingAndGlyphs">3:42</text>
<text x="1766" y="218" font-size="15" fill="#e070e0" textLength="78" lengthAdjust="spacingAndGlyphs">Daily Open</text>
<text x="1774" y="236" font-size="19" fill="#e070e0" textLength="60" lengthAdjust="spacingAndGlyphs">157.71</text>
<text x="1812" y="252" font-size="14" fill="#e070e0" textLength="31" lengthAdjust="spacingAndGlyphs">-126</text>
<text x="1818" y="268" font-size="14" fill="#aaa" textLength="23" lengthAdjust="spacingAndGlyphs">248</text>
<text x="1818" y="286" font-size="14" fill="#f08a10" textLength="23" lengthAdjust="spacingAndGlyphs">146</text>
<text x="1792" y="308" font-size="23" fill="#e070e0" textLength="43" lengthAdjust="spacingAndGlyphs">87%</text>
</g>
<text x="1769" y="252" font-size="14" fill="#fff" textLength="34" lengthAdjust="spacingAndGlyphs">P2Op</text>
<text x="1774" y="268" font-size="14" fill="#aaa" textLength="29" lengthAdjust="spacingAndGlyphs">HiLo</text>
<text x="1777" y="286" font-size="14" fill="#fff" textLength="26" lengthAdjust="spacingAndGlyphs">ADR</text>

<!-- panel 2 -->
<rect x="1758.500" y="586.500" width="95" height="195" fill="#20282d" stroke="#fff" stroke-width="1.500"/>
<g font-weight="bold">
<text x="1771" y="613" font-size="24" fill="#fff" textLength="76" lengthAdjust="spacingAndGlyphs">GBPJPYz</text>
<text x="1760" y="640" font-size="20" fill="#6a6a6a" textLength="91" lengthAdjust="spacingAndGlyphs">OpenPips</text>
<text x="1763" y="696" font-size="20" fill="#6a6a6a" textLength="86" lengthAdjust="spacingAndGlyphs">OpenPos</text>
<text x="1765" y="746" font-size="20" fill="#6a6a6a" textLength="81" lengthAdjust="spacingAndGlyphs">Daily P/L</text>
</g>
<g font-family="Liberation Serif,serif">
<text x="1792" y="671" font-size="25" fill="#6a6a6a" textLength="55" lengthAdjust="spacing">0. 00</text>
<text x="1794" y="721" font-size="18" fill="#6a6a6a" textLength="55" lengthAdjust="spacing">0. 00%</text>
<text x="1772" y="772" font-size="20" fill="#40d0d0" textLength="77" lengthAdjust="spacing">149. 17%</text>
</g>
<text class="LH" x="1782" y="734">LH</text><text class="HL" x="1772" y="762">HL</text>

<!-- price axis -->
<g class="ax">
<path d="M1863 133h3M1863 166h3M1863 199h3M1863 232h3M1863 265h3M1863 298h3M1863 331h3M1863 365h3M1863 398h3M1863 431h3M1863 464h3M1863 497h3M1863 530h3M1863 563h3M1863 596h3M1863 629h3M1863 662h3M1863 695h3M1863 728h3M1863 761h3M1863 794h3M1863 827h3" stroke="#ddd"/>
<text class="ax" x="1868" y="137">162.425</text><text class="ax" x="1868" y="170">162.185</text><text class="ax" x="1868" y="203">161.945</text><text class="ax" x="1868" y="236">161.705</text><text class="ax" x="1868" y="269">161.470</text><text class="ax" x="1868" y="302">161.230</text><text class="ax" x="1868" y="335">160.990</text><text class="ax" x="1868" y="369">160.750</text><text class="ax" x="1868" y="402">160.510</text><text class="ax" x="1868" y="435">160.270</text><text class="ax" x="1868" y="468">160.030</text><text class="ax" x="1868" y="501">159.790</text><text class="ax" x="1868" y="534">159.550</text><text class="ax" x="1868" y="567">159.315</text><text class="ax" x="1868" y="600">159.075</text><text class="ax" x="1868" y="633">158.835</text><text class="ax" x="1868" y="666">158.595</text><text class="ax" x="1868" y="699">158.355</text><text class="ax" x="1868" y="732">158.115</text><text class="ax" x="1868" y="765">157.875</text><text class="ax" x="1868" y="798">157.635</text><text class="ax" x="1868" y="831">157.395</text>
</g>

<!-- RSI window -->
<rect x="12" y="829" width="1851" height="3" fill="#e8e8e8"/>
<rect x="13" y="832" width="1850" height="66" fill="#0d1a3e"/>
<rect x="13" y="898" width="1850" height="66" fill="#3d111b"/>
<rect x="12" y="832" width="1.200" height="132" fill="#eee"/>
<g stroke="#ffff55" stroke-width="1" stroke-dasharray="3 2"><path d="M13 873.500H1863M13 925.500H1863"/></g>
<path d="M13 898.500H1863" stroke="#a0a0a0" stroke-dasharray="3 2"/>
<path d="M137 832V964M521 832V964M905 832V964M1289 832V964M1641 832V964M1673 832V964" stroke="#ddd" stroke-dasharray="3 3"/>
<path d="M107 898V945M389 898V950M300 840V905M1165 845V895M1430 895V955M1488 850V950M1533 850V935M1562 855V940M1621 850V935M1700 860V900" stroke="#8a8a8a" stroke-dasharray="2 3"/>
<g stroke="#00e000" stroke-width="3"><path d="M142 832V964M297 832V964M453 832V964M842 832V964M1061 832V964M1517 832V964M1553 832V964M1693 832V964"/></g>
<g stroke="#ee0000" stroke-width="3"><path d="M293.500 832V964M321.500 832V964M793 832V964M874 832V964M1081 832V964M1549 832V964M1565 832V964M1709 832V964M757 862V898"/></g>
<use href="#rsi" transform="translate(10,4)" stroke="#fff" stroke-width="1" stroke-dasharray="2 2" fill="none"/>
<use href="#rsi" stroke="#2da7e0" stroke-width="2" fill="none"/>
<g stroke="#d01c50" stroke-width="3.500" fill="none">
<polyline points="12,870 37,882 67,891 104,892 129,897 144,892"/>
<polyline points="202,864 248,872 254,869"/>
<polyline points="269,869 297,877 318,874 349,895 367,898 404,897"/>
<polyline points="628,850 667,854 695,860 704,857"/>
<polyline points="723,852 747,858"/>
<polyline points="770,838 796,863 827,879 870,878 912,893 960,918 991,915"/>
<polyline points="1110,897 1159,927 1165,918"/>
<polyline points="1275,902 1326,932 1354,928"/>
<polyline points="1409,918 1449,958 1473,952"/>
<polyline points="1571,902 1583,923 1614,947"/>
<polyline points="1647,925 1672,940"/>
<polyline points="1815,902 1840,913 1863,920"/>
</g>
<g stroke="#1fe07a" stroke-width="3.500" fill="none">
<polyline points="144,892 159,873 178,864 202,864"/>
<polyline points="254,869 269,869"/>
<polyline points="404,897 453,893 490,882 533,881 570,863 597,848 628,849"/>
<polyline points="704,857 723,852"/>
<polyline points="747,858 770,838"/>
<polyline points="991,915 1039,910 1076,895 1110,897"/>
<polyline points="1165,918 1186,903 1275,902"/>
<polyline points="1354,928 1400,917 1409,918"/>
<polyline points="1473,952 1519,930 1546,903 1571,902"/>
<polyline points="1614,947 1647,925"/>
<polyline points="1672,935 1711,900 1815,902"/>
</g>
<text x="1766" y="868" font-size="44" font-weight="bold" fill="#ff69b4" textLength="78" lengthAdjust="spacingAndGlyphs">RSI</text>
<text x="1758" y="908" font-size="45" font-weight="bold" fill="#ff69b4" textLength="99" lengthAdjust="spacingAndGlyphs">37.5</text>
<text class="ax" x="1866" y="842">100</text><text class="ax" x="1866" y="877">70</text><text class="ax" x="1866" y="929">30</text><text class="ax" x="1866" y="962">0</text>

<!-- time axis -->
<rect x="7" y="964" width="1903" height="22" fill="#152029"/>
<path d="M12 964v4M140 964v4M204 964v4M268 964v4M332 964v4M396 964v4M460 964v4M524 964v4M588 964v4M652 964v4M716 964v4M780 964v4M844 964v4M908 964v4M972 964v4M1036 964v4M1100 964v4M1164 964v4M1228 964v4M1292 964v4M1356 964v4M1420 964v4M1484 964v4M1548 964v4M1612 964v4M1676 964v4M1740 964v4M1804 964v4M76 964v4" stroke="#ccc"/>
<g>
<text class="tm" x="12" y="979" textLength="55" lengthAdjust="spacingAndGlyphs">26 Dec 2022</text>
<text class="tm" x="76" y="979" textLength="55" lengthAdjust="spacingAndGlyphs">26 Dec 20:15</text>
<text class="tm" x="140" y="979" textLength="55" lengthAdjust="spacingAndGlyphs">27 Dec 00:15</text>
<text class="tm" x="204" y="979" textLength="55" lengthAdjust="spacingAndGlyphs">27 Dec 04:15</text>
<text class="tm" x="268" y="979" textLength="55" lengthAdjust="spacingAndGlyphs">27 Dec 08:15</text>
<text class="tm" x="332" y="979" textLength="55" lengthAdjust="spacingAndGlyphs">27 Dec 12:15</text>
<text class="tm" x="396" y="979" textLength="55" lengthAdjust="spacingAndGlyphs">27 Dec 16:15</text>
<text class="tm" x="460" y="979" textLength="55" lengthAdjust="spacingAndGlyphs">27 Dec 20:15</text>
<text class="tm" x="524" y="979" textLength="55" lengthAdjust="spacingAndGlyphs">28 Dec 00:15</text>
<text class="tm" x="588" y="979" textLength="55" lengthAdjust="spacingAndGlyphs">28 Dec 04:15</text>
<text class="tm" x="652" y="979" textLength="55" lengthAdjust="spacingAndGlyphs">28 Dec 08:15</text>
<text class="tm" x="716" y="979" textLength="55" lengthAdjust="spacingAndGlyphs">28 Dec 12:15</text>
<text class="tm" x="780" y="979" textLength="55" lengthAdjust="spacingAndGlyphs">28 Dec 16:15</text>
<text class="tm" x="844" y="979" textLength="55" lengthAdjust="spacingAndGlyphs">28 Dec 20:15</text>
<text class="tm" x="908" y="979" textLength="55" lengthAdjust="spacingAndGlyphs">29 Dec 00:15</text>
<text class="tm" x="972" y="979" textLength="55" lengthAdjust="spacingAndGlyphs">29 Dec 04:15</text>
<text class="tm" x="1036" y="979" textLength="55" lengthAdjust="spacingAndGlyphs">29 Dec 08:15</text>
<text class="tm" x="1100" y="979" textLength="55" lengthAdjust="spacingAndGlyphs">29 Dec 12:15</text>
<text class="tm" x="1164" y="979" textLength="55" lengthAdjust="spacingAndGlyphs">29 Dec 16:15</text>
<text class="tm" x="1228" y="979" textLength="55" lengthAdjust="spacingAndGlyphs">29 Dec 20:15</text>
<text class="tm" x="1292" y="979" textLength="55" lengthAdjust="spacingAndGlyphs">30 Dec 00:15</text>
<text class="tm" x="1356" y="979" textLength="55" lengthAdjust="spacingAndGlyphs">30 Dec 04:15</text>
<text class="tm" x="1420" y="979" textLength="55" lengthAdjust="spacingAndGlyphs">30 Dec 08:15</text>
<text class="tm" x="1484" y="979" textLength="55" lengthAdjust="spacingAndGlyphs">30 Dec 12:15</text>
<text class="tm" x="1548" y="979" textLength="55" lengthAdjust="spacingAndGlyphs">30 Dec 16:15</text>
<text class="tm" x="1612" y="979" textLength="55" lengthAdjust="spacingAndGlyphs">30 Dec 20:15</text>
<text class="tm" x="1676" y="979" textLength="48" lengthAdjust="spacingAndGlyphs">2 Jan 00:15</text>
<text class="tm" x="1740" y="979" textLength="48" lengthAdjust="spacingAndGlyphs">2 Jan 04:15</text>
<text class="tm" x="1804" y="979" textLength="48" lengthAdjust="spacingAndGlyphs">2 Jan 08:15</text>
</g>

<!-- tabs -->
<rect x="7" y="986" width="1903" height="2" fill="#e8e8e8"/>
<rect x="7" y="987.500" width="1903" height="20.500" fill="#f0f0f0"/>
<rect x="7" y="987" width="1903" height="1" fill="#222"/>
<rect x="107" y="988" width="98" height="19" fill="#fff"/>
<path d="M107 988v19M205 988v19M107 1006.500h98" stroke="#222"/>
<text class="tab" x="23" y="1002" textLength="72" lengthAdjust="spacingAndGlyphs">GBPJPYz,M1</text>
<text class="tab" x="116" y="1002" textLength="79" lengthAdjust="spacingAndGlyphs" style="fill:#222">GBPJPYz,M15</text>
<text class="tab" x="216" y="1002" textLength="70" lengthAdjust="spacingAndGlyphs">GBPJPYz,M1</text>
<text class="tab" x="309" y="1002" textLength="138" lengthAdjust="spacingAndGlyphs">GBPJPYz_6S,M1 (offline)</text>
<text class="tab" x="469" y="1002" textLength="145" lengthAdjust="spacingAndGlyphs">GBPJPYz_12S,M1 (offline)</text>
<text class="tab" x="637" y="1002" textLength="138" lengthAdjust="spacingAndGlyphs">GBPJPYz_3S,M1 (offline)</text>
<path d="M298 991v13M458 991v13M626 991v13M786 991v13" stroke="#999"/>
<path d="M1881 994l-3 3 3 3M1896 994l3 3-3 3" stroke="#999" fill="none"/>
<!-- status -->
<rect x="7" y="1007.500" width="1903" height="24" fill="#f0f0f0"/>
<text class="st" x="9" y="1025" textLength="101" lengthAdjust="spacingAndGlyphs">寻求帮助,请按F1键</text>
<path d="M1096 1009v22M1230 1009v22M1347 1009v22M1429 1009v22M1510 1009v22M1588 1009v22M1667 1009v22M1746 1009v22" stroke="#aaa"/>
<text class="st" x="1102" y="1025">Default</text>
<text class="st" x="1236" y="1025" textLength="97" lengthAdjust="spacingAndGlyphs">2022.12.29 02:00</text>
<text class="st" x="1353" y="1025" textLength="62" lengthAdjust="spacingAndGlyphs">O: 161.025</text>
<text class="st" x="1435" y="1025" textLength="61" lengthAdjust="spacingAndGlyphs">H: 161.057</text>
<text class="st" x="1516" y="1025" textLength="58" lengthAdjust="spacingAndGlyphs">L: 160.907</text>
<text class="st" x="1594" y="1025" textLength="59" lengthAdjust="spacingAndGlyphs">C: 160.941</text>
<text class="st" x="1673" y="1025" textLength="37" lengthAdjust="spacingAndGlyphs">V: 464</text>
<path d="M1752 1027v-10M1755 1027v-12M1758 1027v-8M1761 1027v-11" stroke="#4f6a10" stroke-width="2"/>
<path d="M1764 1027v-9M1767 1027v-12M1770 1027v-9M1773 1027v-13" stroke="#2868b0" stroke-width="2"/>
<text class="st" x="1779" y="1025" textLength="73" lengthAdjust="spacingAndGlyphs">53382/12 kb</text>
<path d="M1896 1031l12-12M1900 1031l8-8M1904 1031l4-4" stroke="#999"/>
</svg>
</body></html>
